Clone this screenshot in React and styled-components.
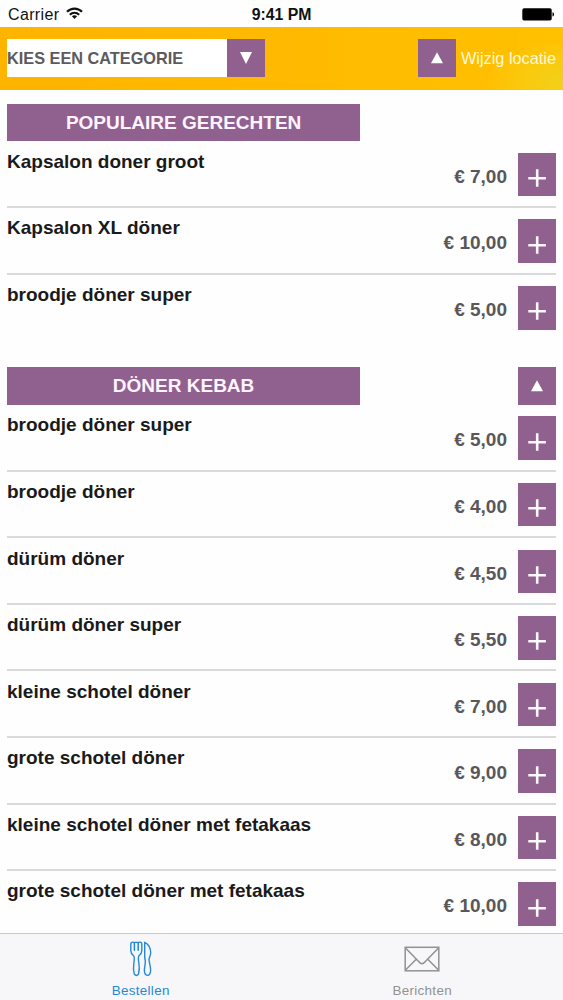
import React from 'react';
import styled, { createGlobalStyle } from 'styled-components';

const GlobalStyle = createGlobalStyle`
  * {
    box-sizing: border-box;
  }
  body {
    margin: 0;
    background: #fefefe;
    font-family: "Liberation Sans", Arial, sans-serif;
  }
`;

const Screen = styled.div`
  width: 563px;
  height: 1000px;
  display: flex;
  flex-direction: column;
  overflow: hidden;
`;

const StatusBar = styled.header`
  height: 27px;
  flex: none;
  display: grid;
  grid-template-columns: 1fr auto 1fr;
  align-items: center;
  padding: 2px 8px 0;
  color: #111;
  font-size: 16px;
  line-height: 18px;
`;

const Carrier = styled.div`
  display: flex;
  align-items: center;
  letter-spacing: 0.35px;
  svg {
    margin: -2px 0 0 7px;
  }
`;

const Clock = styled.div`
  font-weight: bold;
  font-size: 15.8px;
`;

const Battery = styled.div`
  display: flex;
  justify-content: flex-end;
`;

const Toolbar = styled.div`
  height: 62.6px;
  flex: none;
  display: flex;
  align-items: center;
  padding: 0 7px;
  background: radial-gradient(ellipse 75px 42px at 100% 85%, #f3d01a 0, #fac90e 55%, rgba(254, 192, 0, 0) 100%),
    linear-gradient(90deg, #ffb400 0%, #ffb900 45%, #ffc100 100%);
`;

const Select = styled.div`
  width: 220px;
  height: 38px;
  display: flex;
  align-items: center;
  background: #fff;
  color: #5c5a5d;
  font-size: 16.3px;
  font-weight: bold;
  white-space: nowrap;
`;

const SquareButton = styled.button`
  width: 38px;
  height: ${props => props.$height || 38}px;
  flex: none;
  display: flex;
  justify-content: center;
  align-items: center;
  margin: 0;
  padding: 0;
  border: 0;
  background: #90618f;
`;

const LocationLink = styled.div`
  display: flex;
  align-items: center;
  gap: 5px;
  margin-left: auto;
  color: #fff8dc;
  font-size: 16.3px;
  white-space: nowrap;
`;

const MenuList = styled.main`
  flex: 1;
  min-height: 0;
  overflow: hidden;
  padding: 14.2px 7px 0;
`;

const Section = styled.section`
  margin-bottom: 26px;
`;

const SectionHead = styled.div`
  height: 37.7px;
  display: flex;
  justify-content: space-between;
`;

const SectionTitle = styled.h2`
  width: 353.2px;
  margin: 0;
  background: #90618f;
  color: #fff4ff;
  font-size: 19px;
  line-height: 38px;
  text-align: center;
`;

const Dish = styled.div`
  height: 66.6px;
  display: flex;
  align-items: flex-start;
  padding-top: 11.4px;
  border-bottom: ${props => (props.$last ? '0' : '2px solid #dadada')};
`;

const DishName = styled.div`
  flex: 1;
  margin-top: -2px;
  color: #1a1a1a;
  font-size: 19px;
  font-weight: bold;
  line-height: 22px;
`;

const Price = styled.div`
  margin: 13px 11px 0 0;
  color: #59575a;
  font-size: 19px;
  font-weight: bold;
  line-height: 22px;
`;

const TabBar = styled.nav`
  height: 67px;
  flex: none;
  display: flex;
  border-top: 1px solid #c9c9cb;
  background: #f7f6f8;
`;

const Tab = styled.div`
  flex: 1;
  display: flex;
  flex-direction: column;
  align-items: center;
  color: ${props => (props.$active ? '#2587d8' : '#929292')};
  font-size: 13.4px;
  letter-spacing: 0.3px;
  line-height: 16px;
  svg {
    height: 40px;
    margin: 5px 0 4px;
  }
`;

const Plus = styled.svg`
  margin-top: 7px;
`;

function Triangle({ down }) {
  return (
    <svg width="12" height="12" viewBox="0 0 12 12" fill="#fff">
      <path d={down ? 'M0 0H12L6 12Z' : 'M0 11.3H12L6 0.3Z'} />
    </svg>
  );
}

function PlusIcon() {
  return (
    <Plus width="18" height="18" viewBox="0 0 18 18" stroke="#fff8ff" strokeWidth="2.6">
      <path d="M9.2 0.2V17.8M0.3 9.2H17.9" />
    </Plus>
  );
}

function WifiIcon() {
  return (
    <svg width="17" height="13" viewBox="0 0 17 13" fill="none" stroke="#111" strokeWidth="2.1">
      <path d="M1 4.8C5.2 0.5 11.8 0.5 16 4.8M3.8 7.7C6.5 5.1 10.5 5.1 13.2 7.7" />
      <path d="M8.5 12L5.9 9.3C7.4 8 9.6 8 11.1 9.3Z" fill="#111" stroke="none" />
    </svg>
  );
}

function BatteryIcon() {
  return (
    <svg width="34" height="13" viewBox="0 0 34 13" fill="#000">
      <rect x="1.3" y="0.3" width="29.4" height="12.2" rx="1.8" />
      <path d="M31.5 4.3C33.6 4.7 33.6 8.2 31.5 8.6Z" />
    </svg>
  );
}

function CutleryIcon() {
  return (
    <svg width="24" height="40" viewBox="0 0 24 40" fill="none" stroke="currentColor" strokeWidth="1.4" strokeLinecap="round" strokeLinejoin="round">
      <path d="M1.8 5C1.8 3 3.9 3 4.4 3.4H10.4C11 3 12.8 3 12.8 5V11.8C12.8 14.6 11.3 15.8 9.8 17C9.1 18.3 9.3 20.5 9.8 23.5C10.5 27.6 10.5 31.5 9.6 34.8C8.9 37 5.9 37 5.2 34.8C4.3 31.5 4.3 27.6 4.9 23.5C5.4 20.5 5.5 18.3 4.8 17C3.3 15.8 1.8 14.6 1.8 11.8Z" />
      <path d="M5.4 3.8V11.2M9.2 3.8V11.2" strokeWidth="1.5" />
      <path d="M15.7 3.3C19.4 4.7 21.8 9.2 21.7 13.8C21.6 17 20.1 18.7 20 20.4C20.1 23.8 21.8 27.5 21.6 31.3C21.5 34.5 20.3 36.4 18.4 36.4C16.3 36.4 15.3 34.3 15.4 31C15.5 27.5 16.6 24.5 16.3 21.5L15.7 18.5Z" />
    </svg>
  );
}

function EnvelopeIcon() {
  return (
    <svg width="36" height="40" viewBox="0 0 36 40" fill="none" stroke="currentColor" strokeWidth="1.5">
      <rect x="1.2" y="8.3" width="33.6" height="23.5" />
      <path d="M1.5 9L14.4 22.3Q18 27.2 21.6 22.3L34.5 9M1.5 31L12 20.5M34.5 31L24 20.5" />
    </svg>
  );
}

const sections = [
  {
    title: 'POPULAIRE GERECHTEN',
    dishes: [
      ['Kapsalon doner groot', '7,00'],
      ['Kapsalon XL döner', '10,00'],
      ['broodje döner super', '5,00'],
    ],
  },
  {
    title: 'DÖNER KEBAB',
    backToTop: true,
    dishes: [
      ['broodje döner super', '5,00'],
      ['broodje döner', '4,00'],
      ['dürüm döner', '4,50'],
      ['dürüm döner super', '5,50'],
      ['kleine schotel döner', '7,00'],
      ['grote schotel döner', '9,00'],
      ['kleine schotel döner met fetakaas', '8,00'],
      ['grote schotel döner met fetakaas', '10,00'],
    ],
  },
];

function App() {
  return (
    <Screen>
      <GlobalStyle />
      <StatusBar>
        <Carrier>Carrier<WifiIcon /></Carrier>
        <Clock>9:41 PM</Clock>
        <Battery><BatteryIcon /></Battery>
      </StatusBar>
      <Toolbar>
        <Select>KIES EEN CATEGORIE</Select>
        <SquareButton><Triangle down /></SquareButton>
        <LocationLink>
          <SquareButton><Triangle /></SquareButton>
          Wijzig locatie
        </LocationLink>
      </Toolbar>
      <MenuList>
        {sections.map(section => (
          <Section key={section.title}>
            <SectionHead>
              <SectionTitle>{section.title}</SectionTitle>
              {section.backToTop && <SquareButton><Triangle /></SquareButton>}
            </SectionHead>
            {section.dishes.map(([name, price], i) => (
              <Dish key={name} $last={i === section.dishes.length - 1}>
                <DishName>{name}</DishName>
                <Price>€ {price}</Price>
                <SquareButton $height={43.5}><PlusIcon /></SquareButton>
              </Dish>
            ))}
          </Section>
        ))}
      </MenuList>
      <TabBar>
        <Tab $active><CutleryIcon />Bestellen</Tab>
        <Tab><EnvelopeIcon />Berichten</Tab>
      </TabBar>
    </Screen>
  );
}

export default App;
